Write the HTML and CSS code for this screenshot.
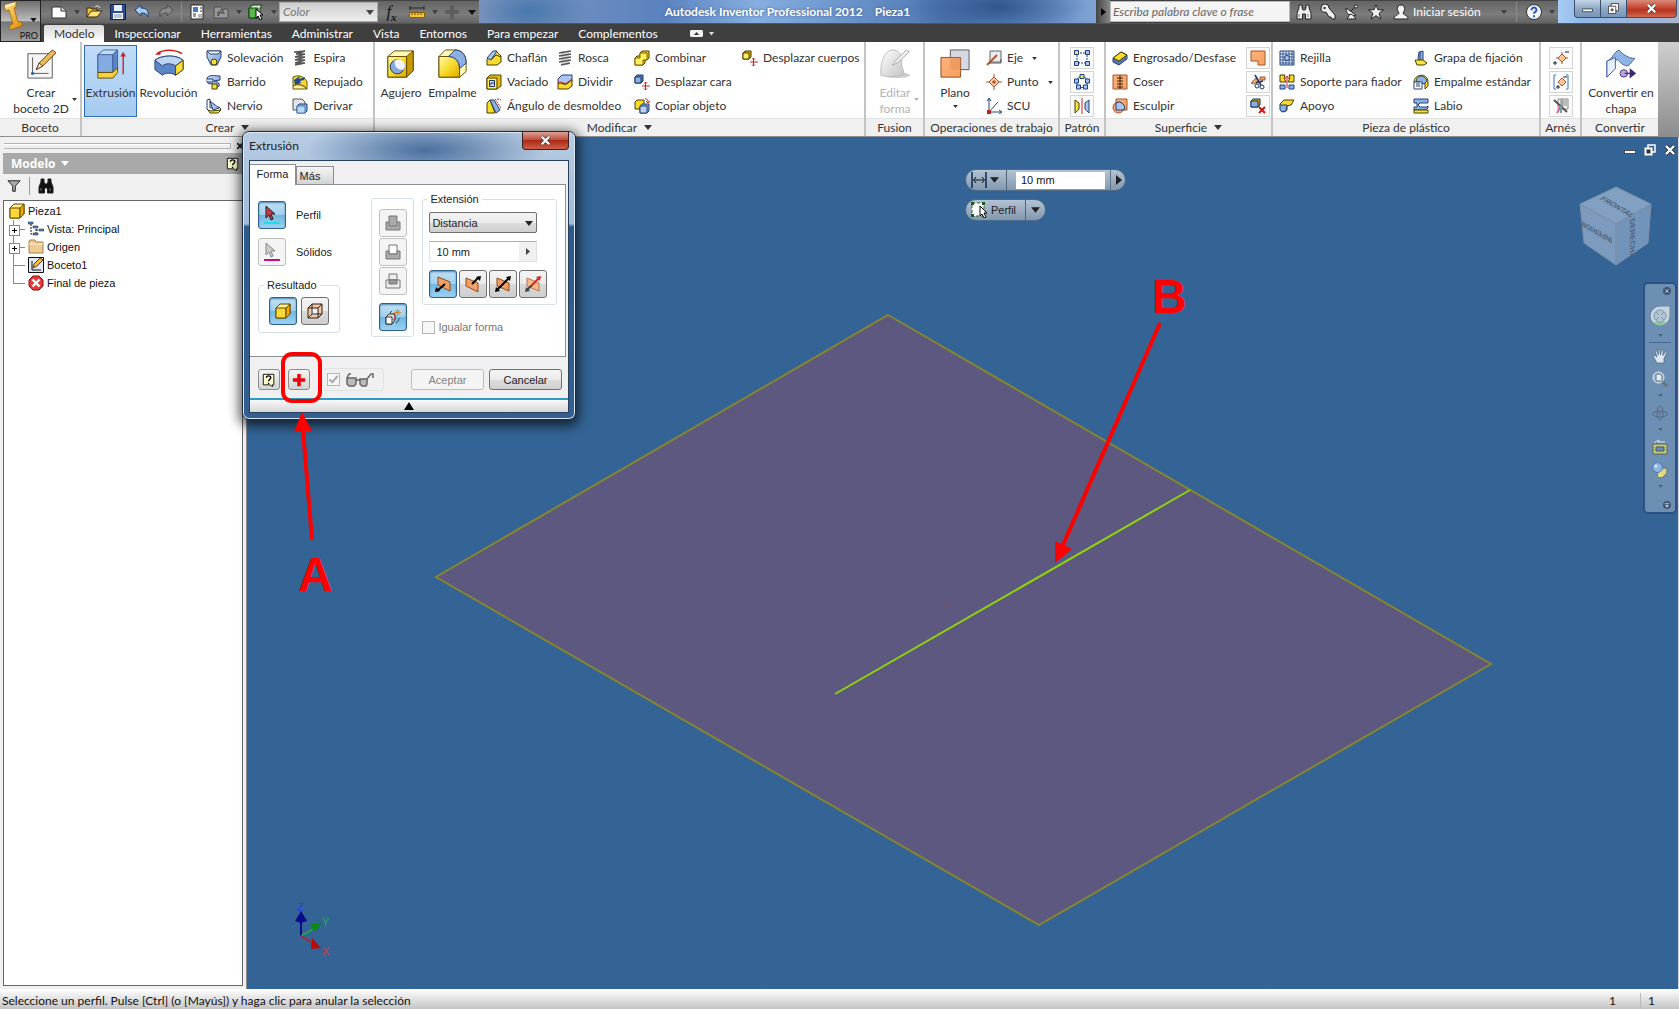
FILE: index.html
```html
<!DOCTYPE html>
<html lang="es">
<head>
<meta charset="utf-8">
<title>Autodesk Inventor Professional 2012 - Pieza1</title>
<link rel="stylesheet" href="styles.css">
</head>
<body>
<svg class="sprite" aria-hidden="true">
  <defs>
    <linearGradient id="gy" x1="0" y1="0" x2="1" y2="1"><stop offset="0" stop-color="#fffbb0"/><stop offset=".5" stop-color="#f7dc2c"/><stop offset="1" stop-color="#e0a800"/></linearGradient>
    <linearGradient id="gb" x1="0" y1="0" x2="1" y2="1"><stop offset="0" stop-color="#cfe0f8"/><stop offset="1" stop-color="#6d94d4"/></linearGradient>
    <linearGradient id="go" x1="0" y1="0" x2="1" y2="1"><stop offset="0" stop-color="#ffb27c"/><stop offset="1" stop-color="#f6a05e"/></linearGradient>
    <linearGradient id="gg" x1="0" y1="0" x2="1" y2="1"><stop offset="0" stop-color="#fff"/><stop offset="1" stop-color="#c4c4c4"/></linearGradient>
    <linearGradient id="gl" x1="0" y1="0" x2="1" y2="1"><stop offset="0" stop-color="#ffe08a"/><stop offset="1" stop-color="#e08a00"/></linearGradient>
  </defs>
  <symbol id="caret" viewBox="0 0 8 5"><path d="M0 0h8L4 5z" fill="currentColor"/></symbol>
  <symbol id="logo" viewBox="0 0 22 28"><path d="M3 3l11-3v5l-2 1 4 14 4 0v4L8 28v-5l3-1L7 8 3 9z" fill="url(#gl)" stroke="#a36500" stroke-width=".8"/><path d="M3 3l11-3-2 3L3 6z" fill="#fff0b8"/></symbol>

  <symbol id="new" viewBox="0 0 16 16"><path d="M1 3h9l5 4v7H1z" fill="#fff" stroke="#333"/><path d="M10 3v4h5" fill="#ddd" stroke="#333"/></symbol>
  <symbol id="open" viewBox="0 0 16 16"><path d="M1 13V4h4l1 1h5v3" fill="#f5c63a" stroke="#3a2a00"/><path d="M1 13l4-6h11l-5 6z" fill="#ffe27a" stroke="#3a2a00"/><path d="M9 3c2-2 4-1 5 1" stroke="#fff" fill="none"/></symbol>
  <symbol id="save" viewBox="0 0 16 16"><path d="M.5.5h15v15h-15z" fill="#2e4f8f" stroke="#0f1f45"/><path d="M4 1h8v6H4z" fill="#e8eefc"/><path d="M3 9h10v6H3z" fill="#fff"/><path d="M4 11h8M4 13h8" stroke="#7186b5"/></symbol>
  <symbol id="undo" viewBox="0 0 16 16"><path d="M1 6l6-5v3c6 0 8 3 7 9-1-3-3-4-7-4v3z" fill="#a8cdf5" stroke="#1b3f78"/></symbol>
  <symbol id="redo" viewBox="0 0 16 16"><path d="M15 6L9 1v3C3 4 1 7 2 13c1-3 3-4 7-4v3z" fill="#8a8a8a" stroke="#4c4c4c"/></symbol>
  <symbol id="doc" viewBox="0 0 16 16"><path d="M2 1h12v14H2z" fill="#fff" stroke="#222"/><path d="M4 3h5v5H4z" fill="#4479c4"/><path d="M11 4h2M11 7h2M4 10h3M4 12h3" stroke="#333"/><path d="M9 10h4v4H9z" fill="#bbb"/></symbol>
  <symbol id="update" viewBox="0 0 16 16"><path d="M1 3h7l2 4 3-3 2 3v7H1zM4 9l5-4" fill="#999" stroke="#4f4f4f"/><path d="M5 12c0-4 5-5 6-2" fill="none" stroke="#555" stroke-width="2"/></symbol>
  <symbol id="pickcube" viewBox="0 0 16 16"><path d="M1 4l4-3h9l-2 3v8l-2 2H1z" fill="#d8f3d0" stroke="#163d16"/><path d="M1 4h9v10H1z" fill="#57b947" stroke="#163d16"/><path d="M8 5v9l2-2 2 4 2-1-2-4h3z" fill="#fff" stroke="#000"/></symbol>
  <symbol id="measure" viewBox="0 0 16 16"><path d="M1 4h14M1 2v4M15 2v4" stroke="#222"/><path d="M.5 8.500h15v5H.5z" fill="#f5c542" stroke="#8d6000"/><path d="M3 9v2M6 9v2M9 9v2M12 9v2" stroke="#6d4a00"/></symbol>
  <symbol id="plusgray" viewBox="0 0 16 16"><path d="M6 1h4v5h5v4h-5v5H6v-5H1V6h5z" fill="#5e5e5e"/></symbol>
  <symbol id="binoc" viewBox="0 0 16 16"><path d="M3 1h3v3l1 2h2l1-2V1h3v3l2 5v6H9.500v-5h-3v5H1V9l2-5z" fill="currentColor" stroke="#222"/><path d="M3 10v3M12 10v3" stroke="#777"/></symbol>
  <symbol id="key" viewBox="0 0 16 16"><path d="M1 4a4 4 0 0 1 8 0l6 7v4h-3l-1-2H9l-3-5C3 9 1 7 1 4z" fill="#eee" stroke="#222"/><circle cx="4.500" cy="4" r="1.300" fill="#444"/></symbol>
  <symbol id="dish" viewBox="0 0 16 16"><path d="M2 4c0 7 5 9 10 7zM7 7l5-5" fill="#eee" stroke="#222"/><circle cx="12" cy="2.500" r="1.500" fill="#fff" stroke="#222"/><path d="M6 10l-3 5h9l-3-4z" fill="#eee" stroke="#222"/></symbol>
  <symbol id="star" viewBox="0 0 16 16"><path d="M8 .8l2 5h5.500l-4.400 3.500 1.700 5.700L8 11.700 3.200 15l1.700-5.700L.5 5.800H6z" fill="#eee" stroke="#222"/></symbol>
  <symbol id="user" viewBox="0 0 16 16"><path d="M8 1c5 0 4 6 2 8 0 2 5 2 5 6H1c0-4 5-4 5-6C4 7 3 1 8 1z" fill="#f4f4f4" stroke="#222"/></symbol>
  <symbol id="helpround" viewBox="0 0 16 16"><circle cx="8" cy="8" r="7.500" fill="#f2f6ff" stroke="#333"/><path d="M5.500 6.200c0-3.700 5.300-3.200 5 0-.2 1.700-2.500 1.800-2.500 3.600M8 11.300v1.900" fill="none" stroke="#2c5cad" stroke-width="2"/></symbol>

  <symbol id="sketch" viewBox="0 0 32 32"><path d="M2 5h26v26H2z" fill="#f6f6f8" stroke="#555"/><path d="M7 9v17h17" fill="none" stroke="#555"/><circle cx="7" cy="26" r="1.700" fill="#2b63b5"/><path d="M11 22l3-7L28 1l4 3-14 14z" fill="#f0b95a" stroke="#5d3a10"/><path d="M11 22l3-7 4 3z" fill="#fff0d2" stroke="#5d3a10"/></symbol>
  <symbol id="extrude" viewBox="0 0 32 32"><path d="M2 6l6-5h15l-5 5v19H2z" fill="#c5dcf7" stroke="#3d5f9c"/><path d="M2 6h16v19H2z" fill="#84abe0" stroke="#3d5f9c"/><path d="M18 6l5-5v19l-5 5z" fill="#5e87c8" stroke="#3d5f9c"/><path d="M2 25h16l5-5v5l-5 6H2z" fill="#fbd03a" stroke="#5e4a00"/><path d="M29 27V6" stroke="#c22" stroke-width="1.500"/><path d="M26 8l3-5 3 5z" fill="#c22"/></symbol>
  <symbol id="revolve" viewBox="0 0 32 32"><path d="M3 5C10 0 22 0 30 5" fill="none" stroke="#c22" stroke-width="1.600"/><path d="M1 6l6-4v4z" fill="#c22"/><path d="M1 12c7-6 24-6 30 0v10l-8 6c-4-3-11-3-14 0l-8-6z" fill="#5d86c6" stroke="#263f6e"/><path d="M1 12c7-6 24-6 30 0l-8 6c-4-3-11-3-14 0z" fill="#bed4f3" stroke="#263f6e"/><path d="M23 18l8-6v10l-8 6z" fill="#f8df3b" stroke="#4c4300"/></symbol>
  <symbol id="loft" viewBox="0 0 16 16"><path d="M1 1h14v6l-4 8H5L1 7z" fill="url(#gb)" stroke="#24426f"/><path d="M1 1h14l-3 3H4z" fill="#fff" stroke="#24426f"/><circle cx="8" cy="12" r="3" fill="#f8df3b" stroke="#4c4300"/></symbol>
  <symbol id="sweep" viewBox="0 0 16 16"><path d="M1 4c3-4 8-2 13-2v4l-6 1c5 1 6 3 5 5l-4 3v-3c1-3-7-1-8-4z" fill="url(#gb)" stroke="#24426f"/><path d="M1 5h6v3H1" fill="#d9e7fb" stroke="#24426f"/><path d="M6 10h5v5H6z" fill="#f8df3b" stroke="#4c4300"/></symbol>
  <symbol id="rib" viewBox="0 0 16 16"><path d="M1 2l3-1v9l9-1 2 2-3 3H4l-3-3z" fill="#fff" stroke="#24426f"/><path d="M4 3l9 7-6 2z" fill="#a8c5ee" stroke="#24426f"/><path d="M2 12l2 3h8l3-3-10 1z" fill="#f8df3b" stroke="#4c4300"/></symbol>
  <symbol id="coil" viewBox="0 0 16 16"><path d="M2 2l11-1-9 3h9L3 7h10L3 10h10L3 13h10L3 15" fill="none" stroke="#555" stroke-width="1.600"/></symbol>
  <symbol id="emboss" viewBox="0 0 16 16"><path d="M1 3c6-3 12 0 14 5v7c-4-5-9-5-14-3z" fill="#f7d62e" stroke="#6d5600"/><path d="M2 6l6-4-1 3 6-2-1 3-4 1 1 2-6 2z" fill="#214b8f"/><path d="M1 12c4-2 9-2 14 3H1z" fill="#fff0a0" stroke="#6d5600"/></symbol>
  <symbol id="derive" viewBox="0 0 16 16"><path d="M1 1h9l3 3v8H1z" fill="#e3e3ea" stroke="#555"/><path d="M5 8l2-2h8v7l-2 2H5z" fill="#7eb2e8" stroke="#24426f"/><path d="M5 8h8v7H5z" fill="#b9d9f7" stroke="#4d7db5"/></symbol>
  <symbol id="hole" viewBox="0 0 32 32"><path d="M2 8l7-6h20v21l-7 7H2z" fill="#fffbb8" stroke="#5e4a00"/><path d="M2 8h20v22H2z" fill="url(#gy)" stroke="#5e4a00"/><path d="M22 8l7-6v21l-7 7z" fill="#c99a00" stroke="#5e4a00"/><circle cx="12" cy="19" r="7.500" fill="#86a9dd" stroke="#1d3560"/><path d="M9 12.500c0 7 4 10 10 9.500A7 7 0 0 0 9 12.500z" fill="#eef4fd"/></symbol>
  <symbol id="fillet" viewBox="0 0 32 32"><path d="M1 8l7-7h10c8 0 12 6 12 13v10l-7 6H1z" fill="#fffbb8" stroke="#5e4a00"/><path d="M1 8h10c8 0 12 6 12 14v8H1z" fill="url(#gy)" stroke="#5e4a00"/><path d="M11 8l7-7c8 0 12 6 12 14l-7 6c0-8-5-13-12-13z" fill="#8db0e4" stroke="#24426f"/></symbol>
  <symbol id="chamfer" viewBox="0 0 16 16"><path d="M1 9l6-7 3-1 5 5v6l-4 3H1z" fill="#f7dc2c" stroke="#4c3c00"/><path d="M1 8l6-7h4L5 10z" fill="#a9c7f0" stroke="#24426f"/><path d="M5 10l5-5 5 2" fill="none" stroke="#4c3c00"/></symbol>
  <symbol id="shell" viewBox="0 0 16 16"><path d="M1 4l3-3h11v11l-4 3H1z" fill="#e8bd12" stroke="#4c3c00"/><path d="M1 4h10v11H1z" fill="#fff05c" stroke="#4c3c00"/><path d="M3.500 6.500h5v6h-5z" fill="#d0e0f8" stroke="#1d3560"/><path d="M5 11V9h3" fill="none" stroke="#1d3560"/></symbol>
  <symbol id="draft" viewBox="0 0 16 16"><path d="M1 5l3-3 5 13H1z" fill="#f7dc2c" stroke="#4c3c00"/><path d="M4 2h4l6 10-4 3z" fill="#8db0e4" stroke="#24426f"/><path d="M9 1l6 9M11 1l4 1" fill="none" stroke="#c22" stroke-dasharray="2 1"/></symbol>
  <symbol id="thread" viewBox="0 0 16 16"><path d="M4 1h8v14H4z" fill="#ddd"/><path d="M2 3l12-2M2 6l12-2M2 9l12-2M2 12l12-2M4 15l9-2" stroke="#555" stroke-width="1.500"/></symbol>
  <symbol id="split" viewBox="0 0 16 16"><path d="M1 5l4-4h10v6l-4 3H1z" fill="#a9c7f0" stroke="#24426f"/><path d="M1 10c4-3 6 3 10-1l4-3v6l-4 3H1z" fill="#f7dc2c" stroke="#4c3c00"/><path d="M1 9c4-3 6 3 10-1l4-3" fill="none" stroke="#c22"/></symbol>
  <symbol id="combine" viewBox="0 0 16 16"><path d="M6 3l2-2h7v7l-2 2h-2v3l-2 2H1V8l2-2h3z" fill="#f2c917" stroke="#4c3c00"/><path d="M6 3h7v7H9v5H1V8h5z" fill="#fff05c" stroke="#7c6300"/></symbol>
  <symbol id="moveface" viewBox="0 0 16 16"><path d="M1 3l2-2h6v6L7 9H1z" fill="#5d86c6" stroke="#1d3560"/><path d="M1 3h6v6H1z" fill="#8db0e4" stroke="#1d3560"/><path d="M11.500 8v8M8 12h8M10 9.500l1.500-1.500L13 9.500M10 14.500l1.500 1.500 1.500-1.500" fill="none" stroke="#c22"/></symbol>
  <symbol id="movebody" viewBox="0 0 16 16"><path d="M1 3l2-2h6v6L7 9H1z" fill="#e0ae00" stroke="#4c3c00"/><path d="M1 3h6v6H1z" fill="#fff05c" stroke="#4c3c00"/><path d="M11.500 8v8M8 12h8M10 9.500l1.500-1.500L13 9.500M10 14.500l1.500 1.500 1.500-1.500" fill="none" stroke="#c22"/></symbol>
  <symbol id="copyobj" viewBox="0 0 16 16"><path d="M1 4l2-2h7v7l-2 2H1z" fill="#f7dc2c" stroke="#4c3c00"/><path d="M6 8l2-2h7v7l-2 2H6z" fill="#7ea4e0" stroke="#24426f"/><path d="M6 8h7v7H6z" fill="#b9d1f5" stroke="#24426f"/><path d="M11 1c3 0 3 1 3 4M12 3l2 2 2-2" fill="none" stroke="#c22"/></symbol>
  <symbol id="fusion" viewBox="0 0 32 32"><ellipse cx="18" cy="28" rx="14" ry="3" fill="#ccc"/><path d="M1 28C0 12 6 0 15 1c7 1 9 8 8 16l3 10c-8 3-18 3-25 1z" fill="url(#gg)" stroke="#bbb"/><path d="M13 17l4-5L28 1l3 2-11 11-6 3z" fill="#eee" stroke="#aaa"/></symbol>
  <symbol id="plane" viewBox="0 0 32 32"><path d="M11 1h20v21H11z" fill="#d5d9e6" stroke="#555"/><path d="M1 9h21v21H1z" fill="url(#go)" stroke="#8a4a1a"/><path d="M11 9h11v13H11z" fill="#e28d58" opacity=".5"/></symbol>
  <symbol id="axis" viewBox="0 0 16 16"><path d="M4 1h11v11H4z" fill="#e9ebf2" stroke="#666"/><path d="M1 15L11 5" stroke="#b0572a" stroke-width="2"/><path d="M3 13L15 13V9" fill="none" stroke="#555"/></symbol>
  <symbol id="point" viewBox="0 0 16 16"><path d="M8 0v16M0 8h16" stroke="#a4552c"/><path d="M8 3l5 5-5 5-5-5z" fill="#ffc79a" stroke="#a4552c"/><path d="M8 6l2 2-2 2-2-2z" fill="#a4552c"/></symbol>
  <symbol id="ucs" viewBox="0 0 16 16"><path d="M3 1v13h12M3 14L12 4" fill="none" stroke="#27477e"/><path d="M1 3l2-3 2 3M13 12l3 2-3 2" fill="none" stroke="#27477e"/><path d="M1 12h4v4H1z" fill="#b22"/></symbol>
  <symbol id="rectpat" viewBox="0 0 16 16"><path d="M3 3h10v10H3z" fill="none" stroke="#27477e" stroke-dasharray="2 1"/><g fill="#a9c7f0" stroke="#1d3f80"><path d="M.5.5h4v4h-4z" fill="#f4e64a"/><path d="M11.500.5h4v4h-4zM.5 11.500h4v4h-4zM11.500 11.500h4v4h-4z"/></g></symbol>
  <symbol id="circpat" viewBox="0 0 16 16"><circle cx="8" cy="8" r="5.500" fill="none" stroke="#27477e"/><g fill="#a9c7f0" stroke="#1d3f80"><path d="M6 .5h4v4H6z" fill="#f4e64a"/><path d="M.5 5h4v4h-4zM11.500 5h4v4h-4zM2.500 11h4v4h-4zM9.500 11h4v4h-4z"/></g></symbol>
  <symbol id="mirror" viewBox="0 0 16 16"><path d="M1 2l4 3v6l-4 4z" fill="#f7e63c" stroke="#4c3c00"/><path d="M15 2l-4 3v6l4 4z" fill="#a9c7f0" stroke="#24426f"/><path d="M8 0v16" stroke="#c22"/></symbol>
  <symbol id="thicken" viewBox="0 0 16 16"><path d="M1 8l8-6 6 3v4l-8 6-6-3z" fill="#4f78b8" stroke="#24426f"/><path d="M1 8l8-6 6 3-8 6z" fill="#f7dc2c" stroke="#4c3c00"/></symbol>
  <symbol id="stitch" viewBox="0 0 16 16"><path d="M1 1h14v14H1z" fill="url(#go)" stroke="#a4552c"/><path d="M8 1v14M5 4h6M5 7h6M5 10h6M5 13h6" stroke="#3d2412"/></symbol>
  <symbol id="sculpt" viewBox="0 0 16 16"><path d="M4 1h11v11H4z" fill="url(#go)" stroke="#a4552c"/><circle cx="6.500" cy="9.500" r="5.500" fill="#f6a77a" stroke="#a4552c"/><path d="M4 5v7h8a5.500 5.500 0 0 0-8-7z" fill="#a9c7f0" stroke="#24426f"/></symbol>
  <symbol id="patch" viewBox="0 0 16 16"><path d="M1 1h14v14H8v-4H1z" fill="url(#go)" stroke="#a4552c"/></symbol>
  <symbol id="trim" viewBox="0 0 16 16"><path d="M1 9l5-5 2 3-4 3zM10 3h5v3h-5z" fill="url(#go)" stroke="#a4552c"/><path d="M5 1l6 10M13 7L6 9" stroke="#1d3560" stroke-width="1.500"/><circle cx="12" cy="13" r="2" fill="none" stroke="#1d3560"/><circle cx="7" cy="12" r="2" fill="none" stroke="#1d3560"/></symbol>
  <symbol id="delface" viewBox="0 0 16 16"><path d="M1 3l2-2h7v6L8 9H1z" fill="#e0ae00" stroke="#1d3560"/><path d="M1 3h7v6H1z" fill="#8db0e4" stroke="#1d3560"/><path d="M9 9l6 6M15 9l-6 6" stroke="#c11" stroke-width="2"/></symbol>
  <symbol id="grill" viewBox="0 0 16 16"><path d="M1 1h14v14H1z" fill="#dbe6f7" stroke="#27477e"/><path d="M4 1v14M7 1v14M10 1v14M13 1v14M1 4h14M1 7h14M1 10h14M1 13h14" stroke="#27477e" stroke-width=".8"/><circle cx="8" cy="8" r="2.500" fill="#a9c7f0" stroke="#24426f"/></symbol>
  <symbol id="boss" viewBox="0 0 16 16"><path d="M1 1h5l-1 3 2 4H1zM15 1h-5l1 3-2 4h6z" fill="#f7dc2c" stroke="#4c3c00"/><path d="M1 11h5v4H1zM10 11h5v4h-5z" fill="#8db0e4" stroke="#24426f"/><path d="M8 14V3M6 5l2-3 2 3" fill="none" stroke="#c22"/></symbol>
  <symbol id="rest" viewBox="0 0 16 16"><path d="M1 6l4-4h10l-3 5-4 1v4l-3 2-3-2z" fill="#f7dc2c" stroke="#4c3c00"/><path d="M1 7h7l-1 6-4 1-2-2z" fill="#8db0e4" stroke="#24426f"/></symbol>
  <symbol id="snap" viewBox="0 0 16 16"><path d="M6 2l4-1v9l-3 2-2-4z" fill="#8db0e4" stroke="#24426f"/><path d="M2 10h8l4 3-3 2H4z" fill="#f7e63c" stroke="#4c3c00"/><path d="M7 2v8" stroke="#24426f"/></symbol>
  <symbol id="rule" viewBox="0 0 16 16"><path d="M1 8c0-8 14-10 14 0v4l-3 3V9c-1-5-7-4-8 1z" fill="#f7dc2c" stroke="#4c3c00"/><path d="M3 7c2-8 10-5 11 0l-3 3z" fill="#8db0e4" stroke="#24426f"/><path d="M1 8h8v7H1z" fill="#fff" stroke="#24426f"/><path d="M3 10h4M3 12h4" stroke="#24426f"/></symbol>
  <symbol id="lip" viewBox="0 0 16 16"><path d="M1 1h14v4H7l-2 2 2 2h7l1-1v2l-3 2H1V9h3V5H1z" fill="#8db0e4" stroke="#24426f"/><path d="M1 12h14v3H1z" fill="#f7e63c" stroke="#4c3c00"/></symbol>
  <symbol id="pin" viewBox="0 0 16 16"><path d="M9 2v12M3 8h12" stroke="#a4552c"/><path d="M9 4l4 4-4 4-4-4z" fill="#ffc79a" stroke="#a4552c"/><path d="M12 2h4M0 13h4M2 11v4" stroke="#222"/></symbol>
  <symbol id="pingroup" viewBox="0 0 16 16"><path d="M3 1H1v14h2M13 1h2v14h-2" fill="none" stroke="#3a77c2"/><path d="M9 4l4 4-4 4-4-4z" fill="#ffc79a" stroke="#a4552c"/><path d="M3 13h4M5 11v4M10 3h4" stroke="#222"/></symbol>
  <symbol id="pintable" viewBox="0 0 16 16"><path d="M5 1h10v10H5z" fill="#eee" stroke="#888"/><path d="M7 3h7M7 5h7M7 7h7M9 1v10" stroke="#888"/><path d="M1 2l13 12" stroke="#555" stroke-width="2"/><path d="M8 8l-4 7" stroke="#d66" stroke-width="2"/><path d="M8 8v7" stroke="#79b" stroke-width="2"/></symbol>
  <symbol id="sheet" viewBox="0 0 32 32"><path d="M1 13C8 10 8 3 14 1c4 5 10 9 17 9-3 2-5 7-8 8-5 0-8-4-11-7-4 2-3 7-3 11L1 30z" fill="#8fb4e6" stroke="#3d5f9c"/><path d="M1 13l9-4v12l-9 9z" fill="#e6f0fd" stroke="#3d5f9c"/><circle cx="19" cy="26" r="4" fill="#b7a5dd" stroke="#4b3a82"/><path d="M20 26h9M26 22l5 4-5 4z" stroke="#3c2a70" fill="#3c2a70" stroke-width="1.500"/></symbol>

  <symbol id="funnel" viewBox="0 0 16 16"><path d="M1 2h14L9.500 8v6h-3V8z" fill="#aaa" stroke="#111"/></symbol>
  <symbol id="helpnote" viewBox="0 0 16 16"><path d="M1.500 1.500h12v12H12v2l-3-2H1.500z" fill="#ffffcf" stroke="#000"/><path d="M5 5.500C5 2.500 10 2.500 10 5.500c0 2-2.500 1.500-2.500 4M7.500 11v1.500" fill="none" stroke="#000" stroke-width="1.600"/></symbol>
  <symbol id="part" viewBox="0 0 16 16"><path d="M1 5l4-4h10v10l-4 4H1z" fill="#ffef9a" stroke="#5e4a00"/><path d="M1 5h10v10H1z" fill="#ffd83a" stroke="#5e4a00"/><path d="M11 5l4-4v10l-4 4z" fill="#f0a800" stroke="#5e4a00"/></symbol>
  <symbol id="views" viewBox="0 0 16 16"><path d="M3 3v10h3M8 5v8M8 9h4" fill="none" stroke="#111" stroke-dasharray="2 1"/><path d="M0 1h5v2H0zM5 5h5v2H5zM5 12h5v2H5zM11 8h5v2h-5z" fill="#4f86c2" stroke="#123" stroke-width=".5"/></symbol>
  <symbol id="folder" viewBox="0 0 16 16"><path d="M1 14V3l1-2h5l1 2h7v11z" fill="#eecb94" stroke="#a58048"/><path d="M1 5h14" stroke="#fff0d0"/></symbol>
  <symbol id="sk16" viewBox="0 0 16 16"><path d="M.5.5h15v15H.5z" fill="#dfe9f7" stroke="#111"/><path d="M4 4v9h9" fill="none" stroke="#111"/><path d="M5 11l1-4 6-6 3 2-6 6z" fill="#f2bd33" stroke="#5d3a10"/></symbol>
  <symbol id="endpart" viewBox="0 0 16 16"><path d="M5 1h6l4 4v6l-4 4H5l-4-4V5z" fill="#e23b3b" stroke="#7c1010"/><path d="M4.500 4.500l7 7M11.500 4.500l-7 7" stroke="#fff" stroke-width="2.400"/></symbol>

  <symbol id="arrowr" viewBox="0 0 20 20"><path d="M4 1v12l3-3 2 5 2-1-2-5h4z" fill="#c43a44" stroke="#222"/><path d="M2 18h16" stroke="#25dbe8" stroke-width="2"/></symbol>
  <symbol id="arrowg" viewBox="0 0 20 20"><path d="M4 1v12l3-3 2 5 2-1-2-5h4z" fill="#ccc" stroke="#888"/><path d="M2 18h16" stroke="#b8109a" stroke-width="2"/></symbol>
  <symbol id="frame" viewBox="0 0 16 16"><path d="M1 5l4-4h10v10l-4 4H1z" fill="#f6c9a4" stroke="#222"/><path d="M5 5h6v6l-1 1H4V5z" fill="#f4f4f4"/><path d="M1 5h10v10M11 5l4-4M5 1v10h10M5 11l-4 4" fill="none" stroke="#222"/></symbol>
  <symbol id="join" viewBox="0 0 16 16"><path d="M4 1h8v6h3v8H1V7h3z" fill="#aaa" stroke="#777"/><path d="M4 7v4h8V7" fill="none" stroke="#777"/></symbol>
  <symbol id="cut" viewBox="0 0 16 16"><path d="M4 1h8v9H4z" fill="#fff" stroke="#777"/><path d="M1 7h3v3h8V7h3v8H1z" fill="#aaa" stroke="#777"/></symbol>
  <symbol id="intersect" viewBox="0 0 16 16"><path d="M1 7h14v8H1zM4 1h8v6H4z" fill="#eee" stroke="#777"/><path d="M4 7h8v4H4z" fill="#999" stroke="#777"/></symbol>
  <symbol id="newsolid" viewBox="0 0 16 16"><path d="M1 8l3-3h6v6l-3 4H1z" fill="#ddd" stroke="#333"/><path d="M1 8h6v7H1z" fill="#fff" stroke="#333"/><path d="M5 4l2-2M11 14c2-1 3-3 3-5" fill="none" stroke="#246"/><path d="M8 5c3 1 3 4 0 6" stroke="#c22" fill="none"/><path d="M12.500 0v7M9 3.500h7M10 1l5 5M15 1l-5 5" stroke="#e38a20"/></symbol>
  <symbol id="dir1" viewBox="0 0 16 16"><path d="M3 1l12 5v9L3 9z" fill="#f3a066" stroke="#8a4a1a"/><path d="M10 8l-8 7" stroke="#000" stroke-width="2"/><path d="M0 16l1-5 4 4z"/></symbol>
  <symbol id="dir2" viewBox="0 0 16 16"><path d="M1 2l12 5v9L1 10z" fill="#f3a066" stroke="#8a4a1a"/><path d="M7 8l7-7" stroke="#000" stroke-width="2"/><path d="M16 0l-5 1 4 4z"/></symbol>
  <symbol id="dir3" viewBox="0 0 16 16"><path d="M2 2l12 5v8L2 10z" fill="#f3a066" stroke="#8a4a1a"/><path d="M2 14L14 2" stroke="#000" stroke-width="2"/><path d="M16 0l-5 1 4 4zM0 16l1-5 4 4z"/></symbol>
  <symbol id="dir4" viewBox="0 0 16 16"><path d="M2 2l12 5v8L2 10z" fill="#fbb88a" stroke="#b5764a"/><path d="M2 14l5-5" stroke="#444" stroke-width="2"/><path d="M7 9l7-7" stroke="#d22" stroke-width="2"/><path d="M16 0l-5 1 4 4z" fill="#d22"/><path d="M0 16l1-5 4 4z" fill="#444"/></symbol>
  <symbol id="redplus" viewBox="0 0 16 16"><path d="M6 1h4v5h5v4h-5v5H6v-5H1V6h5z" fill="#e8060a"/></symbol>
  <symbol id="glasses" viewBox="0 0 28 14"><path d="M1 5h9v6l-2 2H3l-2-2zM14 6h7v5l-1 2h-4l-2-2z" fill="#bbb" stroke="#666" stroke-width="1.500"/><path d="M10 7h4M1 5l2-4h2M21 6l4-5h2v4" fill="none" stroke="#666" stroke-width="1.500"/></symbol>
  <symbol id="dim" viewBox="0 0 16 16"><path d="M1 0v16M15 0v16" stroke="#14305a" stroke-width="1.600"/><path d="M3 8h10M5 5L2.500 8 5 11M11 5l2.500 3L11 11" fill="none" stroke="#111"/></symbol>
  <symbol id="profile" viewBox="0 0 16 16"><path d="M1 1h12v13H1z" fill="#fff" stroke="#2a6a2a" stroke-dasharray="3 2"/><path d="M0 0h3v3H0zM11 0h3v3h-3zM0 12h3v3H0z" fill="#165c16"/><path d="M9 4v10l2-2 2 4 2-1-2-4h3z" fill="#fff" stroke="#000"/></symbol>
  <symbol id="wheel" viewBox="0 0 22 22"><path d="M11 1h10v10A10 10 0 1 1 11 1z" fill="#c4d3e0" stroke="#6c8299"/><path d="M4 17a9 9 0 0 0 14 0z" fill="#8cc5a5"/><circle cx="11" cy="11" r="6" fill="#b4c5d6" stroke="#7c93a8"/><path d="M7 7l3 3M15 7l-3 3M7 15l3-3M15 15l-3-3" stroke="#7c93a8"/></symbol>
  <symbol id="hand" viewBox="0 0 16 16"><path d="M5 15L1 8l1-1 3 2-2-6 1.500-.5L6.500 7 6 1.500h1.700L8.500 7l1-5.500 1.600.2L11 7.500l2.500-4 1.500.8-3 6.200V15z" fill="#dde5ec" stroke="#54708c" stroke-width=".8"/></symbol>
  <symbol id="zoomdoc" viewBox="0 0 16 16"><path d="M10 10l5 5" stroke="#66727f" stroke-width="3"/><circle cx="6.500" cy="6.500" r="5.500" fill="#a9bdd0" stroke="#dce6ee"/><path d="M4 3h4l2 2v5H4z" fill="#e4ebf2" stroke="#5c7087"/></symbol>
  <symbol id="orbit" viewBox="0 0 16 16"><ellipse cx="8" cy="8" rx="3" ry="7" fill="none" stroke="#516b86"/><ellipse cx="8" cy="9" rx="7.500" ry="3" fill="none" stroke="#516b86"/><path d="M5 8h5M7.500 5.500v5" stroke="#b0547c"/></symbol>
  <symbol id="lookat" viewBox="0 0 16 16"><path d="M2 4l5-3-1 2h7" fill="none" stroke="#dce6ee"/><path d="M1 5h14v10H1z" fill="#c5c775" stroke="#5b6a52"/><path d="M4 8h8v4H4z" fill="#6d90b0" stroke="#40586f"/></symbol>
  <symbol id="visual" viewBox="0 0 16 16"><path d="M6 9l3-3h6v5l-4 4H6z" fill="#d0d49c" stroke="#66705c"/><path d="M6 9h5v6H6z" fill="#e0dd86"/><circle cx="5.500" cy="5.500" r="5" fill="#8db4e0" stroke="#4a78ae"/><circle cx="4" cy="4" r="1.500" fill="#dcebfa"/></symbol>
</svg>

<div class="app">
  <header class="top">
    <button class="app-btn" aria-label="Menú de la aplicación"><svg class="app-logo"><use href="#logo"/></svg><svg class="app-caret"><use href="#caret"/></svg><span>PRO</span></button>
    <div class="top-rows">
      <div class="titlebar">
        <div class="qat">
          <button class="q" aria-label="Nuevo"><svg class="i16"><use href="#new"/></svg></button><button class="qc" aria-label="Más tipos"><svg class="c6"><use href="#caret"/></svg></button>
          <button class="q" aria-label="Abrir"><svg class="i16"><use href="#open"/></svg></button>
          <button class="q" aria-label="Guardar"><svg class="i16"><use href="#save"/></svg></button>
          <button class="q" aria-label="Deshacer"><svg class="i16"><use href="#undo"/></svg></button>
          <button class="q" aria-label="Rehacer"><svg class="i16"><use href="#redo"/></svg></button>
          <i class="sep"></i>
          <button class="q" aria-label="Volver"><svg class="i16"><use href="#doc"/></svg></button>
          <button class="q" aria-label="Actualizar"><svg class="i16"><use href="#update"/></svg></button><button class="qc" aria-label="Opciones de actualización"><svg class="c6"><use href="#caret"/></svg></button>
          <button class="q" aria-label="Seleccionar"><svg class="i16"><use href="#pickcube"/></svg></button><button class="qc" aria-label="Opciones de selección"><svg class="c6"><use href="#caret"/></svg></button>
          <div class="combo color"><select aria-label="Color"><option>Color</option></select><svg class="c8"><use href="#caret"/></svg></div>
          <button class="q fx" aria-label="Parámetros">f<sub>x</sub></button>
          <button class="q" aria-label="Medir"><svg class="i16"><use href="#measure"/></svg></button><button class="qc" aria-label="Opciones de medición"><svg class="c6"><use href="#caret"/></svg></button>
          <button class="q" aria-label="Añadir"><svg class="i16"><use href="#plusgray"/></svg></button>
          <button class="qc dark" aria-label="Personalizar barra"><svg class="c8"><use href="#caret"/></svg></button>
        </div>
        <h1 class="title"><span>Autodesk Inventor Professional 2012</span><span>Pieza1</span></h1>
        <button class="expand" aria-label="Contraer búsqueda"><svg viewBox="0 0 5 8"><path d="M0 0l5 4-5 4z"/></svg></button>
        <input class="search" type="search" placeholder="Escriba palabra clave o frase" aria-label="Buscar">
        <div class="utils">
          <button class="q" aria-label="Buscar"><svg class="i16"><use href="#binoc"/></svg></button>
          <button class="q" aria-label="Suscripción"><svg class="i16"><use href="#key"/></svg></button>
          <button class="q" aria-label="Comunicación"><svg class="i16"><use href="#dish"/></svg></button>
          <button class="q" aria-label="Favoritos"><svg class="i16"><use href="#star"/></svg></button>
          <button class="signin"><svg class="i16"><use href="#user"/></svg><span>Iniciar sesión</span><svg class="c6"><use href="#caret"/></svg></button>
          <i class="sep"></i>
          <button class="q" aria-label="Ayuda"><svg class="i16"><use href="#helpround"/></svg></button><button class="qc" aria-label="Opciones de ayuda"><svg class="c6"><use href="#caret"/></svg></button>
        </div>
        <div class="winctl">
          <button aria-label="Minimizar"><svg viewBox="0 0 12 12"><path d="M.5 6.500h11v3H.5z" fill="#fff" stroke="#444"/></svg></button><button aria-label="Restaurar"><svg viewBox="0 0 12 12"><path d="M3.500.5h8v8h-8z" fill="#fff" stroke="#444"/><path d="M.5 3.500h8v8h-8z" fill="#fff" stroke="#444"/><path d="M3.500 6.500h2v2h-2z" fill="#8fa8c4" stroke="#444"/></svg></button><button class="close" aria-label="Cerrar"><svg viewBox="0 0 12 12"><path d="M2 2l8 8M10 2l-8 8" stroke="#444" stroke-width="4"/><path d="M2 2l8 8M10 2l-8 8" stroke="#fff" stroke-width="2.400"/></svg></button>
        </div>
      </div>
      <nav class="tabs">
        <a class="tab on" href="#modelo">Modelo</a><a class="tab" href="#inspeccionar">Inspeccionar</a><a class="tab" href="#herramientas">Herramientas</a><a class="tab" href="#administrar">Administrar</a><a class="tab" href="#vista">Vista</a><a class="tab" href="#entornos">Entornos</a><a class="tab" href="#para-empezar">Para empezar</a><a class="tab" href="#complementos">Complementos</a>
        <button class="mini" aria-label="Minimizar cinta"><svg viewBox="0 0 24 8"><path d="M1 0h11l1 1v5l-1 1H1L0 6V1z" fill="#f2f2f2"/><path d="M4 5l2.500-3L9 5z" fill="#333"/><path d="M19 2h5l-2.500 3.500z" fill="#ddd"/></svg></button>
      </nav>
    </div>
  </header>

  <div class="ribbon">
    <section class="panel p-boceto">
      <div class="body"><button class="big"><svg class="i32"><use href="#sketch"/></svg><span>Crear<br>boceto 2D</span><svg class="c5 side"><use href="#caret"/></svg></button></div>
      <h2>Boceto</h2>
    </section>
    <section class="panel p-crear">
      <div class="body">
        <button class="big on"><svg class="i32"><use href="#extrude"/></svg><span>Extrusión</span></button>
        <button class="big rev"><svg class="i32"><use href="#revolve"/></svg><span>Revolución</span></button>
        <div class="rows">
          <button class="cmd"><svg class="i16"><use href="#loft"/></svg>Solevación</button><button class="cmd"><svg class="i16"><use href="#sweep"/></svg>Barrido</button><button class="cmd"><svg class="i16"><use href="#rib"/></svg>Nervio</button>
        </div>
        <div class="rows">
          <button class="cmd"><svg class="i16"><use href="#coil"/></svg>Espira</button><button class="cmd"><svg class="i16"><use href="#emboss"/></svg>Repujado</button><button class="cmd"><svg class="i16"><use href="#derive"/></svg>Derivar</button>
        </div>
      </div>
      <h2>Crear <svg class="c8"><use href="#caret"/></svg></h2>
    </section>
    <section class="panel p-mod">
      <div class="body">
        <button class="big agujero"><svg class="i32"><use href="#hole"/></svg><span>Agujero</span></button>
        <button class="big"><svg class="i32"><use href="#fillet"/></svg><span>Empalme</span></button>
        <div class="rows pair">
          <button class="cmd"><svg class="i16"><use href="#chamfer"/></svg>Chaflán</button><button class="cmd"><svg class="i16"><use href="#thread"/></svg>Rosca</button>
          <button class="cmd"><svg class="i16"><use href="#shell"/></svg>Vaciado</button><button class="cmd"><svg class="i16"><use href="#split"/></svg>Dividir</button>
          <button class="cmd wide"><svg class="i16"><use href="#draft"/></svg>Ángulo de desmoldeo</button>
        </div>
        <div class="rows">
          <button class="cmd"><svg class="i16"><use href="#combine"/></svg>Combinar</button><button class="cmd"><svg class="i16"><use href="#moveface"/></svg>Desplazar cara</button><button class="cmd"><svg class="i16"><use href="#copyobj"/></svg>Copiar objeto</button>
        </div>
        <div class="rows">
          <button class="cmd"><svg class="i16"><use href="#movebody"/></svg>Desplazar cuerpos</button>
        </div>
      </div>
      <h2>Modificar <svg class="c8"><use href="#caret"/></svg></h2>
    </section>
    <section class="panel p-fusion">
      <div class="body"><button class="big" disabled><svg class="i32"><use href="#fusion"/></svg><span>Editar<br>forma</span><svg class="c5 side"><use href="#caret"/></svg></button></div>
      <h2>Fusion</h2>
    </section>
    <section class="panel p-trabajo">
      <div class="body">
        <button class="big"><svg class="i32"><use href="#plane"/></svg><span>Plano</span><svg class="c5"><use href="#caret"/></svg></button>
        <div class="rows">
          <button class="cmd"><svg class="i16"><use href="#axis"/></svg>Eje <svg class="c5"><use href="#caret"/></svg></button><button class="cmd"><svg class="i16"><use href="#point"/></svg>Punto <svg class="c5"><use href="#caret"/></svg></button><button class="cmd"><svg class="i16"><use href="#ucs"/></svg>SCU</button>
        </div>
      </div>
      <h2>Operaciones de trabajo</h2>
    </section>
    <section class="panel p-patron">
      <div class="body"><div class="rows icons"><button class="box" aria-label="Patrón rectangular"><svg class="i16"><use href="#rectpat"/></svg></button><button class="box" aria-label="Patrón circular"><svg class="i16"><use href="#circpat"/></svg></button><button class="box" aria-label="Simetría"><svg class="i16"><use href="#mirror"/></svg></button></div></div>
      <h2>Patrón</h2>
    </section>
    <section class="panel p-sup">
      <div class="body">
        <div class="rows"><button class="cmd"><svg class="i16"><use href="#thicken"/></svg>Engrosado/Desfase</button><button class="cmd"><svg class="i16"><use href="#stitch"/></svg>Coser</button><button class="cmd"><svg class="i16"><use href="#sculpt"/></svg>Esculpir</button></div>
        <div class="rows icons"><button class="box" aria-label="Parche"><svg class="i16"><use href="#patch"/></svg></button><button class="box" aria-label="Recortar"><svg class="i16"><use href="#trim"/></svg></button><button class="box" aria-label="Suprimir cara"><svg class="i16"><use href="#delface"/></svg></button></div>
      </div>
      <h2>Superficie <svg class="c8"><use href="#caret"/></svg></h2>
    </section>
    <section class="panel p-plas">
      <div class="body">
        <div class="rows"><button class="cmd"><svg class="i16"><use href="#grill"/></svg>Rejilla</button><button class="cmd"><svg class="i16"><use href="#boss"/></svg>Soporte para fiador</button><button class="cmd"><svg class="i16"><use href="#rest"/></svg>Apoyo</button></div>
        <div class="rows"><button class="cmd"><svg class="i16"><use href="#snap"/></svg>Grapa de fijación</button><button class="cmd"><svg class="i16"><use href="#rule"/></svg>Empalme estándar</button><button class="cmd"><svg class="i16"><use href="#lip"/></svg>Labio</button></div>
      </div>
      <h2>Pieza de plástico</h2>
    </section>
    <section class="panel p-arnes">
      <div class="body"><div class="rows icons"><button class="box" aria-label="Colocar pin"><svg class="i16"><use href="#pin"/></svg></button><button class="box" aria-label="Grupo de pines"><svg class="i16"><use href="#pingroup"/></svg></button><button class="box" aria-label="Propiedades de arnés"><svg class="i16"><use href="#pintable"/></svg></button></div></div>
      <h2>Arnés</h2>
    </section>
    <section class="panel p-conv">
      <div class="body"><button class="big"><svg class="i32"><use href="#sheet"/></svg><span>Convertir en<br>chapa</span></button></div>
      <h2>Convertir</h2>
    </section>
  </div>

  <main class="main">
    <aside class="browser">
      <div class="grip"><i></i><button aria-label="Cerrar panel"><svg viewBox="0 0 6 6"><path d="M0 0l6 6M6 0L0 6" stroke="#000" stroke-width="1.500"/></svg></button></div>
      <div class="bhead"><h2>Modelo</h2><svg class="c8"><use href="#caret"/></svg><button aria-label="Ayuda"><svg class="i14"><use href="#helpnote"/></svg></button></div>
      <div class="btools"><button aria-label="Filtro"><svg class="i14"><use href="#funnel"/></svg></button><i></i><button aria-label="Buscar en el modelo"><svg class="i16"><use href="#binoc"/></svg></button></div>
      <ul class="tree">
        <li class="root"><svg class="i16"><use href="#part"/></svg>Pieza1</li>
        <li class="node plus"><svg class="i16"><use href="#views"/></svg>Vista: Principal</li>
        <li class="node plus"><svg class="i16"><use href="#folder"/></svg>Origen</li>
        <li class="node"><svg class="i16"><use href="#sk16"/></svg>Boceto1</li>
        <li class="node last"><svg class="i16"><use href="#endpart"/></svg>Final de pieza</li>
      </ul>
    </aside>

    <section class="canvas" aria-label="Ventana gráfica">
      <svg class="scene" width="1431" height="852" viewBox="247 137 1431 852">
        <path d="M888 315L1491 664 1039 925 436 577z" fill="#5d587f" stroke="#87862f" stroke-width="2"/>
        <path d="M1190 490L835 694" stroke="#8ed40a" stroke-width="2"/>
        <path d="M945 603h3v2h-3z" fill="#b8304c"/>
        <g class="triad">
          <path d="M301 936V921" stroke="#0a0a90" stroke-width="2"/><path d="M295 921l6-10 6 10-6 2z" fill="#0a0a8c"/>
          <path d="M301 936l14-8" stroke="#2a4" stroke-width="1.500"/><path d="M310 923l12 0-8 9z" fill="#0a8a14"/>
          <path d="M301 936l10 6" stroke="#b22" stroke-width="1.500"/><path d="M312 938l9 10-10 1z" fill="#c00808"/>
          <text x="297" y="911" fill="#2440e8">Z</text><text x="322" y="926" fill="#22b04c">Y</text><text x="322" y="955" fill="#e03038">X</text>
        </g>
        <g class="viewcube" stroke="#7c8fa5">
          <path d="M1616 187l35 17-35 20-36-20z" fill="#82a0c2"/><path d="M1580 204l36 20v41l-32-22z" fill="#7c9bbe"/><path d="M1651 204l-35 20v41l32-22z" fill="#7394ba"/>
          <g stroke="none" fill="#4f6378"><text transform="matrix(.86 .5 -.86 .5 1599 199)">FRONTAL</text><text transform="matrix(-.8 -.46 0 -1 1612 238)">INFERIOR</text><text transform="matrix(0 1 -.86 .5 1630 220)">DERECHA</text></g>
        </g>
      </svg>
      <div class="docctl"><button aria-label="Minimizar documento"><svg viewBox="0 0 12 12"><path d="M.5 6.500h11v3H.5z" fill="#fff" stroke="#4a4a4a"/></svg></button><button aria-label="Restaurar documento"><svg viewBox="0 0 12 12"><path d="M4 1h7v7H4z" fill="none" stroke="#fff" stroke-width="1.500"/><path d="M1.500 4.500h6v6h-6z" fill="#333" stroke="#fff" stroke-width="2"/></svg></button><button aria-label="Cerrar documento"><svg viewBox="0 0 12 12"><path d="M2 2l8 8M10 2l-8 8" stroke="#333" stroke-width="4"/><path d="M2 2l8 8M10 2l-8 8" stroke="#fff" stroke-width="2.400"/></svg></button></div>
      <div class="hud">
        <div class="pill"><button aria-label="Tipo de extensión"><svg class="i16"><use href="#dim"/></svg><svg class="c9"><use href="#caret"/></svg></button><input type="text" value="10 mm" aria-label="Distancia"><button class="go" aria-label="Más opciones"><svg viewBox="0 0 6 10"><path d="M0 0l6 5-6 5z" fill="#222"/></svg></button></div>
        <div class="pill"><button class="perf"><svg class="i16"><use href="#profile"/></svg>Perfil</button><button class="more" aria-label="Opciones de perfil"><svg class="c9"><use href="#caret"/></svg></button></div>
      </div>
      <nav class="navbar" aria-label="Navegación">
        <button class="round" aria-label="Cerrar barra"><svg viewBox="0 0 9 9"><circle cx="4.500" cy="4.500" r="4.500" fill="#3f566e"/><path d="M2.500 2.500l4 4M6.500 2.500l-4 4" stroke="#b8cbe0"/></svg></button>
        <button aria-label="Rueda de navegación"><svg class="i22"><use href="#wheel"/></svg></button><svg class="c5"><use href="#caret"/></svg>
        <hr>
        <button aria-label="Encuadre"><svg class="i16"><use href="#hand"/></svg></button>
        <button aria-label="Zoom"><svg class="i16"><use href="#zoomdoc"/></svg></button><svg class="c5"><use href="#caret"/></svg>
        <button aria-label="Órbita"><svg class="i16"><use href="#orbit"/></svg></button><svg class="c5"><use href="#caret"/></svg>
        <button aria-label="Mirar a"><svg class="i16"><use href="#lookat"/></svg></button>
        <button aria-label="Estilo visual"><svg class="i16"><use href="#visual"/></svg></button><svg class="c5"><use href="#caret"/></svg>
        <button class="round end" aria-label="Personalizar"><svg viewBox="0 0 9 9"><circle cx="4.500" cy="4.500" r="4.500" fill="#3f566e"/><path d="M2 3h5M3 5h3L4.500 7z" stroke="#b8cbe0" fill="#b8cbe0"/></svg></button>
      </nav>
    </section>
  </main>

  <footer class="status"><span class="msg">Seleccione un perfil. Pulse [Ctrl] (o [Mayús]) y haga clic para anular la selección</span><span class="n">1</span><span class="n">1</span></footer>

  <form class="dialog" role="dialog" aria-labelledby="dlg-title">
    <div class="dhead"><h2 id="dlg-title">Extrusión</h2><button type="button" class="dclose" aria-label="Cerrar"><svg viewBox="0 0 12 12"><path d="M2 2l8 8M10 2l-8 8" stroke="#444" stroke-width="4"/><path d="M2 2l8 8M10 2l-8 8" stroke="#fff" stroke-width="2.400"/></svg></button></div>
    <div class="dbody">
      <div class="dtabs"><button type="button" class="on">Forma</button><button type="button">Más</button></div>
      <div class="dpage">
        <div class="col1">
          <label class="pick"><button type="button" class="tb on"><svg class="i20"><use href="#arrowr"/></svg></button>Perfil</label>
          <label class="pick"><button type="button" class="tb off"><svg class="i20"><use href="#arrowg"/></svg></button>Sólidos</label>
          <fieldset class="result"><legend>Resultado</legend><button type="button" class="tb on" aria-label="Sólido"><svg class="i16"><use href="#part"/></svg></button><button type="button" class="tb" aria-label="Superficie"><svg class="i16"><use href="#frame"/></svg></button></fieldset>
        </div>
        <fieldset class="ops" aria-label="Operación"><button type="button" class="tb off" aria-label="Unión"><svg class="i16"><use href="#join"/></svg></button><button type="button" class="tb off" aria-label="Corte"><svg class="i16"><use href="#cut"/></svg></button><button type="button" class="tb off" aria-label="Intersección"><svg class="i16"><use href="#intersect"/></svg></button><button type="button" class="tb on" aria-label="Nuevo sólido"><svg class="i16"><use href="#newsolid"/></svg></button></fieldset>
        <div class="col3">
          <fieldset class="ext"><legend>Extensión</legend>
            <div class="combo dist"><select aria-label="Extensión"><option>Distancia</option></select><svg class="c8"><use href="#caret"/></svg></div>
            <div class="val"><input type="text" value="10 mm" aria-label="Valor de distancia"><button type="button" aria-label="Más valores"><svg viewBox="0 0 4 7"><path d="M0 0l4 3.500L0 7z" fill="#444"/></svg></button></div>
            <div class="dirs"><button type="button" class="tb on" aria-label="Dirección 1"><svg class="i16"><use href="#dir1"/></svg></button><button type="button" class="tb" aria-label="Dirección 2"><svg class="i16"><use href="#dir2"/></svg></button><button type="button" class="tb" aria-label="Simétrico"><svg class="i16"><use href="#dir3"/></svg></button><button type="button" class="tb" aria-label="Asimétrico"><svg class="i16"><use href="#dir4"/></svg></button></div>
          </fieldset>
          <label class="match"><input type="checkbox" disabled>Igualar forma</label>
        </div>
      </div>
      <div class="dfoot">
        <button type="button" class="sq" aria-label="Ayuda"><svg class="i14"><use href="#helpnote"/></svg></button>
        <button type="button" class="sq add" aria-label="Aplicar"><svg class="i14"><use href="#redplus"/></svg></button>
        <label class="prev"><input type="checkbox" checked disabled aria-label="Vista previa"><svg class="gl"><use href="#glasses"/></svg></label>
        <button type="button" class="btn" disabled>Aceptar</button>
        <button type="button" class="btn">Cancelar</button>
      </div>
      <button type="button" class="fold" aria-label="Contraer"><svg viewBox="0 0 10 8"><path d="M0 8h10L5 0z"/></svg></button>
    </div>
  </form>

  <svg class="notes" width="1200" height="620" viewBox="0 0 1200 620">
    <g fill="none" stroke="#f00" stroke-width="4"><rect x="283" y="354" width="37" height="47" rx="9"/><path d="M312 540L303 430"/><path d="M1160 323L1063 545"/></g>
    <path d="M302 412l10 19-18 1zM1055 563l0-22 17 8z" fill="#f00"/>
    <text x="298" y="591">A</text><text x="1152" y="313">B</text>
  </svg>
</div>
</body>
</html>
```
FILE: styles.css
```css
* { box-sizing: border-box; }
html, body { height: 100%; }
body { margin: 0; font: 12px/16px Lato, "Open Sans", sans-serif; color: #333; background: #336495; overflow: hidden; }
button { margin: 0; padding: 0; border: 0; background: none; font: inherit; color: inherit; }
input, select { font: inherit; color: inherit; margin: 0; }
h1, h2 { margin: 0; font: inherit; }
fieldset { margin: 0; padding: 0; min-width: 0; border: 1px solid #d5dfe5; border-radius: 3px; }
legend { padding: 0 3px; }
svg { display: block; flex: none; }
.sprite { position: absolute; width: 0; height: 0; }
.i14 { width: 14px; height: 14px; }
.i16 { width: 16px; height: 16px; }
.i20 { width: 20px; height: 20px; }
.i22 { width: 22px; height: 22px; }
.i32 { width: 32px; height: 32px; }
.c5 { width: 5px; height: 3px; }
.c6 { width: 6px; height: 4px; }
.c8 { width: 8px; height: 5px; }
.c9 { width: 9px; height: 6px; }

.app { position: relative; display: flex; flex-direction: column; min-height: 100vh; }

/* Title bar and tabs */
.top { display: flex; height: 42px; background: #3f3f3f; }
.app-btn { position: relative; width: 41px; background: linear-gradient(#6f6f6f, #bdbdbd 50%, #777 52%, #a0a0a0); border: 1px solid #222; flex: none; }
.app-logo { position: absolute; left: 1px; top: 1px; width: 22px; height: 28px; }
.app-caret { position: absolute; right: 3px; top: 17px; width: 7px; height: 4px; color: #111; }
.app-btn span { position: absolute; right: 2px; bottom: 0; font-size: 9px; line-height: 11px; color: #111; }
.top-rows { flex: 1; min-width: 0; display: flex; flex-direction: column; }
.titlebar { display: flex; height: 24px; border-bottom: 1px solid #555; }
.qat, .utils { display: flex; align-items: center; background: linear-gradient(#646464, #7c7c7c 60%, #636363); border-top: 1px solid #444; }
.qat { padding-left: 6px; }
.q { width: 24px; height: 22px; display: flex; align-items: center; justify-content: center; color: #eee; }
.qc { width: 11px; height: 22px; display: flex; align-items: center; justify-content: center; color: #3c3c3c; }
.qc.dark { width: 15px; color: #111; }
.sep { width: 1px; height: 20px; margin: 0 3px; background: #8c8c8c; }
.combo { position: relative; display: flex; align-items: center; }
.combo select { appearance: none; width: 100%; height: 100%; border: 0; background: none; border-radius: 0; opacity: 1; }
.combo svg { position: absolute; right: 3px; top: 50%; margin-top: -2px; pointer-events: none; }
.color { width: 99px; height: 20px; background: linear-gradient(#cfcfcf, #ededed); border: 1px solid #aaa; color: #777; }
.color select { padding: 0 3px; font-style: italic; }
.color svg { color: #444; }
.fx { width: 27px; color: #111; font: italic 17px/20px "Liberation Serif", serif; }
.fx sub { font: italic bold 11px/11px "Liberation Serif", serif; align-self: flex-end; }
.title { flex: 1; display: flex; justify-content: center; gap: 12px; font-weight: 700; line-height: 24px; color: #fff; white-space: nowrap; overflow: hidden;
  background: radial-gradient(ellipse 60px 30px at 8% 50%, #4878ac, transparent), radial-gradient(ellipse 90px 30px at 84% 30%, #2f568f, transparent), linear-gradient(90deg, #8297c0, #5a82bf 30%, #86aee0 45%, #4f78b4 75%, #7fa2d4); text-shadow: 0 0 3px #3f5f92; }
.expand { width: 14px; background: linear-gradient(90deg, #444, #888); display: flex; align-items: center; justify-content: center; }
.expand svg { width: 5px; height: 8px; }
.search { width: 180px; height: 21px; margin-top: 1px; border: 1px solid #bbb; background: #f4f4f4; padding: 2px; font-style: italic; border-radius: 0; }
.search::placeholder { color: #666; opacity: 1; }
.signin { display: flex; align-items: center; gap: 4px; margin-left: 5px; color: #fff; white-space: nowrap; flex: 1; }
.signin .c6 { margin: 0 9px 0 auto; color: #3c3c3c; }
.utils { width: 268px; padding: 0 1px 0 2px; }
.utils .sep { margin: 0 5px 0 0; }
.winctl { display: flex; width: 121px; padding: 0 2px 0 16px; align-items: flex-start; background: linear-gradient(90deg, #a9cdf3, #8fb8ea 20%, #a9b4cc); }
.winctl button { flex: 1; height: 18px; border: 1px solid #3c4f68; border-top: 0; border-radius: 0 0 0 4px; background: linear-gradient(#c4d4e6, #8ea9c6 50%, #7895b8); display: flex; align-items: center; justify-content: center; }
.winctl button + button { border-left: 0; border-radius: 0; }
.winctl .close { flex: 2; border-radius: 0 0 4px 0; background: linear-gradient(#d98c78, #c4402c 50%, #b8331f 60%, #cf6a50); }
.winctl svg { width: 11px; height: 11px; }
.tabs { display: flex; align-items: flex-end; height: 18px; padding-left: 3px; }
.tab { padding: 0 10px; height: 17px; line-height: 17px; color: #fff; text-decoration: none; white-space: nowrap; }
.tab.on { color: #333; background: linear-gradient(#d8d8d8, #fff); border-radius: 2px 2px 0 0; }
.mini { height: 17px; padding-left: 22px; }
.mini svg { width: 24px; height: 8px; }

/* Ribbon */
.ribbon { display: flex; height: 95px; background: linear-gradient(#cfcfcf, #8d8d8d); border-bottom: 1px solid #8f8f8f; }
.panel { display: flex; flex-direction: column; flex: none; background: linear-gradient(#fff 60%, #fafafa); border-right: 2px solid #c4c4c4; }
.panel .body { display: flex; height: 76px; padding: 3px 0 0 2px; }
.panel h2 { display: flex; justify-content: center; align-items: center; gap: 7px; height: 18px; background: #f0f0f0; border-top: 1px solid #e2e2e2; white-space: nowrap; }
.p-boceto { width: 82px; }
.p-crear { width: 293px; }
.p-mod { width: 491px; }
.p-fusion { width: 59px; }
.p-trabajo { width: 135px; }
.p-patron { width: 46px; }
.p-sup { width: 167px; }
.p-plas { width: 268px; }
.p-arnes { width: 41px; }
.p-conv { width: 76px; border-right: 0; }
.big { position: relative; display: flex; flex-direction: column; align-items: center; gap: 6px; height: 72px; padding-top: 3px; border: 1px solid transparent; width: 54px; white-space: nowrap; }
.big .i32 { width: 30px; height: 30px; }
.big .c5 { margin-top: -2px; }
.big .side { position: absolute; right: 2px; bottom: 15px; }
.big:disabled { color: #b4b4b4; }
.big.on { background: linear-gradient(#bfdcf8, #a6cbf1); border-color: #2c6fb5; }
.p-conv .big { width: 74px; }
.p-boceto .big { width: 78px; }
.rev { width: 64px; }
.p-mod .big { width: 55px; }
.p-mod .agujero { width: 48px; }
.rows { display: grid; grid-template-rows: repeat(3, 24px); justify-items: start; align-content: start; padding: 1px 0 0 6px; }
.cmd { display: flex; align-items: center; gap: 5px; height: 24px; white-space: nowrap; }
.cmd .c5 { margin-left: 4px; }
.p-crear .rows { width: 88px; }
.pair { grid-template-columns: 71px 71px; width: 148px; }
.pair .wide { grid-column: span 2; }
.pair + .rows { width: 108px; }
.p-trabajo .big { width: 56px; }
.p-trabajo .rows { padding-left: 3px; }
.box { width: 24px; height: 22px; margin-top: 1px; display: flex; align-items: center; justify-content: center; background: #fbfbfb; border: 1px solid #d5d5d5; }
.icons { padding-left: 8px; }
.p-sup .body, .p-plas .body { padding-left: 0; }
.p-sup .rows:first-child { width: 132px; }
.p-plas .rows:first-child { width: 134px; }
.p-plas .rows + .rows { width: 132px; }
.p-arnes .icons { padding-left: 6px; }

/* Browser panel */
.main { flex: 1; display: flex; min-height: 0; }
.browser { width: 247px; display: flex; flex-direction: column; padding: 6px 3px 3px; background: #f0f0f0; border-right: 1px solid #8b8b8b; color: #111; font: 11px/16px "Liberation Sans", sans-serif; }
.grip { display: flex; align-items: center; gap: 6px; height: 6px; padding-left: 1px; }
.grip i { flex: 1; height: 6px; border: 1px solid #b4b4b4; border-left: 0; box-shadow: inset 0 1px #fff; }
.grip button svg { width: 6px; height: 6px; }
.bhead { display: flex; align-items: center; gap: 5px; height: 21px; margin-top: 4px; padding: 0 3px 0 8px; background: #a9a9a9; color: #fff; }
.bhead h2 { font: 700 12px/16px "Open Sans", sans-serif; }
.bhead button { margin-left: auto; }
.btools { display: flex; align-items: center; height: 26px; padding: 0 4px 3px; gap: 8px; color: #111; }
.btools i { width: 1px; height: 18px; background: #999; }
.tree { flex: 1; margin: 0; padding: 1px 0 0 5px; list-style: none; background: #fff; border: 1px solid #666; }
.tree li { position: relative; display: flex; align-items: center; gap: 3px; height: 18px; white-space: nowrap; }
.tree .node { padding-left: 19px; }
.node::before { content: ""; position: absolute; left: 4px; top: 0; width: 12px; height: 100%; background: linear-gradient(#888, #888) 0 0 / 1px 100% no-repeat, linear-gradient(#888, #888) 0 9px / 12px 1px no-repeat; }
.node.last::before { background-size: 1px 9px, 12px 1px; }
.node.plus::after { content: ""; position: absolute; left: 0; top: 5px; width: 9px; height: 9px; border: 1px solid #888; background: linear-gradient(#000, #000) center / 5px 1px no-repeat, linear-gradient(#000, #000) center / 1px 5px no-repeat, #fff; }

/* Graphics window */
.canvas { position: relative; flex: 1; min-width: 0; background: #336495; border-right: 1px solid #cfd6de; overflow: hidden; }
.scene { position: absolute; left: 0; top: 0; }
.triad text { font: 11px "Liberation Sans", sans-serif; }
.viewcube text { font: 700 8px "Liberation Sans", sans-serif; }
.docctl { position: absolute; right: 2px; top: 7px; display: flex; gap: 8px; }
.docctl svg { width: 12px; height: 12px; }
.hud { position: absolute; left: 718px; top: 32px; display: flex; flex-direction: column; align-items: flex-start; gap: 8px; color: #111; font: 11px/16px "Liberation Sans", sans-serif; }
.pill { display: flex; align-items: center; height: 22px; border: 1px solid #506b88; border-radius: 11px; background: linear-gradient(#b4c3d3, #8298b0); overflow: hidden; }
.pill button { display: flex; align-items: center; gap: 3px; height: 20px; padding: 0 7px 0 5px; color: #222; border-right: 1px solid #4f6478; }
.pill input { width: 89px; height: 17px; margin: 0 5px 0 9px; border: 0; padding: 0 5px; background: #fff; }
.pill .go { border-right: 0; border-left: 1px solid #5e7489; padding: 0 3px 0 5px; }
.go svg { width: 6px; height: 10px; }
.pill .perf { padding: 0 9px 0 5px; gap: 4px; }
.pill .more { border: 0; padding: 0 5px; }
.navbar { position: absolute; right: 1px; top: 145px; width: 34px; height: 232px; padding: 3px 4px; display: flex; flex-direction: column; align-items: center; background: #6d8fb3; border: 2px solid #2b5280; border-radius: 5px; color: #4a6683; }
.navbar hr { width: 100%; margin: 3px 0 5px; border: 0; border-top: 1px solid #466a92; }
.navbar .c5 { margin: 7px 0 2px; }
.navbar button + button { margin-top: 7px; }
.navbar .c5 + button { margin-top: 6px; }
.navbar .round { align-self: flex-end; }
.navbar .round svg { width: 8px; height: 8px; }
.navbar .round + button { margin-top: 10px; }
.navbar .end { margin-top: auto !important; }

/* Status bar */
.status { display: flex; align-items: center; height: 20px; padding: 3px 12px 0 2px; background: linear-gradient(#fff, #c4c4c4); color: #111; }
.status .msg { flex: 1; }
.status .n { width: 38px; padding-left: 7px; }
.status .n + .n { width: 27px; border-left: 1px solid #bbb; }

/* Extrusion dialog */
.dialog { position: absolute; left: 242px; top: 131px; width: 334px; padding: 2px 6px 6px; border: 1px solid #1d2b3c; border-radius: 7px; color: #222; font: 11px/16px "Liberation Sans", sans-serif;
  background: radial-gradient(ellipse 120px 34px at 55% 18px, #4a6f9e, transparent), linear-gradient(#b8cce2, #9ebbd9 32%, #2d5a8c 33%, #345f90); box-shadow: inset 0 0 0 1px #dce8f4, 0 3px 12px 3px rgba(0, 0, 0, .65); }
.dhead { display: flex; justify-content: space-between; height: 26px; }
.dhead h2 { font: 12px/24px Lato, sans-serif; }
.dclose { width: 47px; height: 18px; margin-top: -2px; border: 1px solid #3d2020; border-top: 0; border-radius: 0 0 4px 4px; background: linear-gradient(#dba096, #c0503f 45%, #ab2a18 50%, #cd6048); display: flex; align-items: center; justify-content: center; }
.dclose svg { width: 11px; height: 11px; }
.dbody { background: #f0f0f0; border: 1px solid #27405e; }
.dtabs { display: flex; align-items: flex-end; height: 23px; }
.dtabs button { width: 38px; height: 18px; border: 1px solid #8a8f96; border-bottom: 0; background: linear-gradient(#f4f4f4, #d4d4d4); padding-right: 10px; }
.dtabs .on { position: relative; z-index: 1; width: 46px; height: 21px; margin-bottom: -1px; padding: 0 0 3px; background: #fff; border-left: 0; }
.dpage { display: flex; height: 173px; margin-right: 2px; padding: 13px 8px 0; background: #fff; border: 1px solid #8a8f96; border-left: 0; }
.tb { display: flex; align-items: center; justify-content: center; width: 28px; height: 28px; border: 1px solid #707070; border-radius: 3px; background: linear-gradient(#f4f4f4, #eaeaea 50%, #d8d8d8 51%, #cfcfcf); }
.tb.on { border-color: #2c628b; background: linear-gradient(#c2e0f4, #a0d0ee 50%, #74b6e0 51%, #9ad2f2); box-shadow: inset 0 1px 2px #4a86b0; }
.tb.off { border-color: #bfbfbf; background: #f4f4f4; }
.col1 { width: 114px; padding-top: 3px; }
.pick { display: flex; align-items: center; gap: 10px; height: 28px; margin-bottom: 9px; }
.result { display: flex; gap: 4px; width: 82px; height: 56px; padding: 4px 0 0 10px; margin-top: 11px; }
.result legend { margin-left: -5px; }
.ops { display: flex; flex-direction: column; align-items: center; gap: 1px; width: 44px; height: 139px; padding-top: 10px; }
.ops .on { margin-top: 7px; }
.col3 { margin-left: 8px; width: 136px; }
.ext { height: 114px; margin-top: -7px; padding: 0 0 0 6px; }
.ext legend { margin-left: -2px; }
.dist { width: 108px; height: 21px; margin-top: 5px; border: 1px solid #707070; border-radius: 2px; background: linear-gradient(#f2f2f2, #ebebeb 50%, #dddddd 51%, #cfcfcf); }
.dist select { padding: 0 2px; }
.val { display: flex; width: 108px; height: 21px; margin-top: 8px; border: 1px solid #dcdfe3; border-top-color: #abadb3; }
.val input { flex: 1; min-width: 0; border: 0; padding: 0 6px; }
.val button { width: 17px; background: #f0f0f0; display: flex; align-items: center; justify-content: center; }
.val button svg { width: 4px; height: 7px; }
.dirs { display: flex; gap: 2px; margin-top: 8px; }
.match { display: flex; align-items: center; gap: 3px; margin-top: 14px; color: #777; }
.match input, .prev input { appearance: none; width: 13px; height: 13px; border: 1px solid #b5b5b5; background: #f6f6f6; }
.prev input { position: relative; }
.prev input::before { content: ""; position: absolute; left: 3px; top: 0; width: 3px; height: 7px; border: solid #aaa; border-width: 0 2px 2px 0; transform: rotate(40deg); }
.dfoot { display: flex; align-items: center; height: 41px; padding: 4px 6px 0 8px; }
.sq { width: 22px; height: 21px; border: 1px solid #8c8c8c; border-radius: 3px; background: linear-gradient(#f4f4f4, #d4d4d4); display: flex; align-items: center; justify-content: center; }
.add { margin-left: 8px; }
.prev { display: flex; align-items: center; gap: 6px; width: 60px; height: 23px; margin: 0 auto 0 14px; padding-left: 3px; border: 1px solid #dfe3e6; border-left: 0; border-radius: 3px; }
.gl { width: 28px; height: 14px; }
.btn { width: 73px; height: 21px; margin-left: 5px; border: 1px solid #707070; border-radius: 3px; background: linear-gradient(#f4f4f4, #ebebeb 50%, #dcdcdc 51%, #cfcfcf); }
.btn:disabled { color: #838383; border-color: #bdbdbd; background: #f4f4f4; }
.fold { display: flex; width: 100%; height: 14px; justify-content: center; align-items: center; border-top: 2px solid #2d9cc4; background: linear-gradient(#f8f8f8, #d8d8d8); }
.fold svg { width: 10px; height: 8px; }

/* Callouts drawn over the window */
.notes { position: absolute; left: 0; top: 0; pointer-events: none; }
.notes text { font: 700 48px "Liberation Sans", sans-serif; fill: #f00; }
```
